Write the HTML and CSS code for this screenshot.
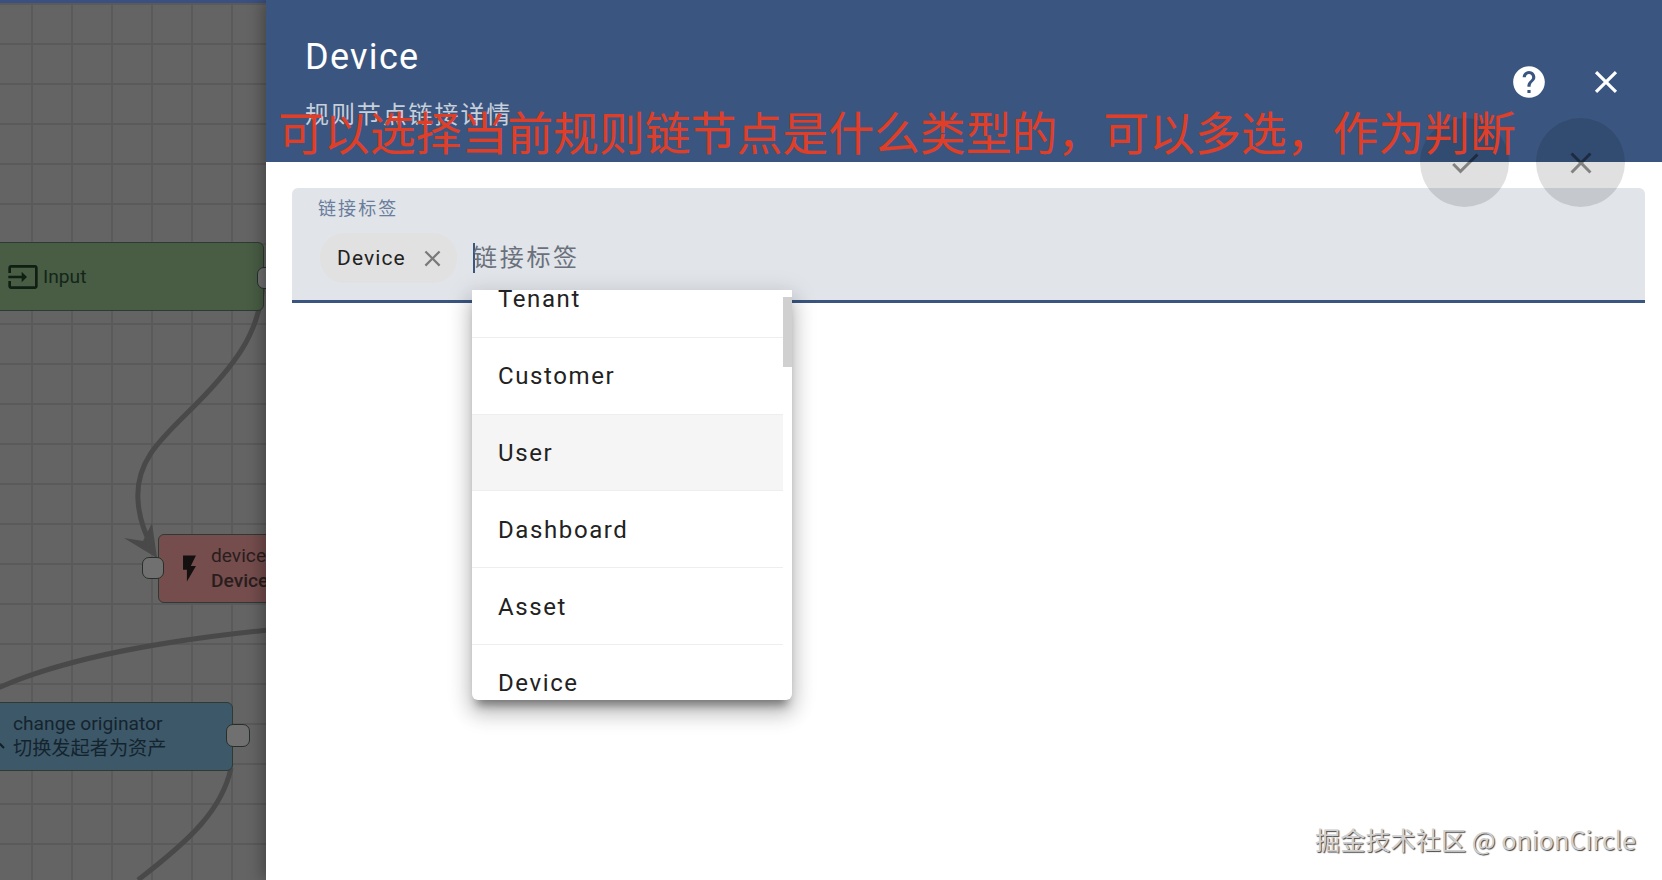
FILE: index.html
```html
<!DOCTYPE html>
<html lang="zh">
<head>
<meta charset="utf-8">
<title>Device</title>
<link rel="stylesheet" href="styles.css">
</head>
<body>
<div class="app">
  <div class="canvas">
    <svg class="edges" width="266" height="880" viewBox="0 0 266 880">
      <path class="edge" d="M263 285 C259 330 240 358 205 395 C170 432 135 455 138 500 C139 520 146 535 153 550"/>
      <path class="arrow" d="M157 558 L124 538 L143 541 L152 523 Z"/>
      <path class="edge" d="M-2 688 C70 656 170 640 268 630"/>
      <path class="edge" d="M231 768 C222 810 190 840 138 880"/>
    </svg>
    <div class="node node-input">
      <svg class="node-icon" viewBox="0 0 24 24"><path d="M21 3.01H3c-1.1 0-2 .9-2 2V9h2V4.99h18v14.03H3V15H1v4.01c0 1.1.9 1.98 2 1.98h18c1.1 0 2-.88 2-1.98v-14c0-1.11-.9-2-2-2zM11 16l4-4-4-4v3H1v2h10v3z"/></svg>
      <span class="node-label">Input</span>
      <span class="port port-out"></span>
    </div>
    <div class="node node-device">
      <span class="port port-in"></span>
      <svg class="node-icon" viewBox="0 0 24 24"><path d="M7 2v11h3v9l7-12h-4l4-8z"/></svg>
      <div class="node-text">
        <span class="node-type">device</span>
        <span class="node-name">Device</span>
      </div>
    </div>
    <div class="node node-change">
      <svg class="node-stub" viewBox="0 0 8 8"><path d="M0 1 L5 6"/></svg>
      <div class="node-text">
        <span class="node-type">change originator</span>
        <span class="node-type">切换发起者为资产</span>
      </div>
      <span class="port port-right"></span>
    </div>
  </div>

  <div class="panel">
    <header class="panel-header">
      <div class="titles">
        <div class="title">Device</div>
        <div class="subtitle">规则节点链接详情</div>
      </div>
      <div class="header-actions">
        <svg class="help" viewBox="0 0 24 24"><path d="M12 2C6.48 2 2 6.48 2 12s4.48 10 10 10 10-4.48 10-10S17.52 2 12 2zm1 17h-2v-2h2v2zm2.07-7.75l-.9.92C13.45 12.9 13 13.5 13 15h-2v-.5c0-1.1.45-2.1 1.17-2.83l1.24-1.26c.37-.36.59-.86.59-1.41 0-1.1-.9-2-2-2s-2 .9-2 2H8c0-2.21 1.79-4 4-4s4 1.79 4 4c0 .88-.36 1.68-.93 2.25z"/></svg>
        <svg class="close" viewBox="0 0 24 24"><path d="M19 6.41L17.59 5 12 10.59 6.41 5 5 6.41 10.59 12 5 17.59 6.41 19 12 13.41 17.59 19 19 17.59 13.41 12z"/></svg>
      </div>
    </header>
    <div class="panel-body">
      <div class="field">
        <div class="field-label">链接标签</div>
        <div class="field-row">
          <div class="chip">
            <span>Device</span>
            <svg class="chip-x" viewBox="0 0 24 24"><path d="M19 6.41L17.59 5 12 10.59 6.41 5 5 6.41 10.59 12 5 17.59 6.41 19 12 13.41 17.59 19 19 17.59 13.41 12z"/></svg>
          </div>
          <div class="placeholder">链接标签</div>
        </div>
      </div>
    </div>
  </div>

  <div class="menu">
    <div class="menu-clip">
      <div class="menu-list">
        <div class="option">Tenant</div>
        <div class="option">Customer</div>
        <div class="option option-hover">User</div>
        <div class="option">Dashboard</div>
        <div class="option">Asset</div>
        <div class="option">Device</div>
      </div>
    </div>
    <div class="thumb"></div>
  </div>

  <div class="fab fab-check">
    <svg viewBox="0 0 24 24"><path d="M9 16.17L4.83 12l-1.42 1.41L9 19 21 7l-1.41-1.41z"/></svg>
  </div>
  <div class="fab fab-cancel">
    <svg viewBox="0 0 24 24"><path d="M19 6.41L17.59 5 12 10.59 6.41 5 5 6.41 10.59 12 5 17.59 6.41 19 12 13.41 17.59 19 19 17.59 13.41 12z"/></svg>
  </div>

  <div class="annotation">可以选择当前规则链节点是什么类型的，可以多选，作为判断</div>
  <div class="watermark">掘金技术社区 @ onionCircle</div>
</div>
</body>
</html>
```
FILE: styles.css
```css
* { box-sizing: border-box; }
html, body { margin: 0; height: 100%; overflow: hidden; background: #fff; }
body { font-family: Roboto, "Noto Sans CJK SC", sans-serif; }

.app { position: relative; display: flex; width: 1662px; height: 880px; overflow: hidden; }

/* rule chain canvas, dimmed by the backdrop */
.canvas {
  position: relative;
  flex: 0 0 266px;
  height: 880px;
  border-top: 3px solid #3a5080;
  background-color: #646464;
  background-image:
    linear-gradient(to right, #5a5a5a 2px, transparent 2px),
    linear-gradient(to bottom, #5a5a5a 2px, transparent 2px);
  background-size: 40px 40px;
  background-position: 31px 0;
  overflow: hidden;
}
.edges { position: absolute; left: 0; top: -3px; }
.edge { fill: none; stroke: #494949; stroke-width: 5; }
.arrow { fill: #494949; }

.node {
  position: absolute;
  display: flex;
  align-items: center;
  border: 1px solid #2e3a34;
  border-radius: 6px;
  font-size: 19.2px;
  color: #1b2a22;
}
.node-input { left: -10px; top: 239px; width: 274px; height: 69px; background: #485d44; padding-left: 16px; }
.node-input .node-icon { width: 32px; height: 32px; fill: #0f1f12; margin-right: 4px; }
.node-label { color: #14261a; }
.node-device { left: 158px; top: 531px; width: 130px; height: 69px; background: #754d4d; padding-left: 15px; color: #2a1d1d; }
.node-device .node-icon { width: 31px; height: 31px; fill: #141010; margin-right: 6px; }
.node-change { left: -12px; top: 699px; width: 245px; height: 69px; background: #3d5868; padding-left: 24px; color: #14242f; }
.node-stub { position: absolute; left: 10px; top: 39px; width: 8px; height: 8px; fill: none; stroke: #10202a; stroke-width: 2; }
.node-text { display: flex; flex-direction: column; gap: 2px; line-height: 23px; white-space: nowrap; padding-bottom: 2px; }
.node-name { font-weight: 500; }

.port {
  position: absolute;
  width: 22px;
  height: 22px;
  border: 1px solid #26302b;
  border-radius: 7px;
  background: #707070;
}
.port-out { right: -16px; top: 24px; }
.port-in { left: -17px; top: 22px; }
.port-right { right: -18px; top: 21px; width: 24px; height: 23px; }

/* side panel */
.panel { flex: 1; display: flex; flex-direction: column; background: #fff; box-shadow: -4px 0 14px rgba(0, 0, 0, .3); position: relative; }
.panel-header {
  height: 162px;
  flex: none;
  display: flex;
  justify-content: space-between;
  background: #3a5680;
  color: #fff;
  padding: 0 40px 0 39px;
}
.titles { padding-top: 33px; }
.title { font-size: 36px; line-height: 48px; letter-spacing: 1.3px; }
.subtitle { margin-top: 18px; font-size: 24px; line-height: 32px; letter-spacing: 1.9px; color: rgba(255, 255, 255, .72); }
.header-actions { display: flex; align-items: center; gap: 39px; height: 164px; margin-right: -3px; }
.help { width: 38px; height: 38px; fill: #fff; }
.close { width: 38px; height: 38px; fill: #fff; }

.panel-body { padding: 26px 17px 0 26px; }
.field {
  height: 115px;
  background: #e1e4e9;
  border-radius: 6px 6px 0 0;
  border-bottom: 3px solid #3a5680;
  padding: 9px 0 0 26px;
}
.field-label { font-size: 18px; line-height: 24px; letter-spacing: 2.1px; color: #6a7d9c; }
.field-row { display: flex; align-items: center; margin-top: 12px; margin-left: 2px; }
.chip {
  display: flex;
  align-items: center;
  width: 137px;
  height: 50px;
  border-radius: 24px;
  background: #e1e1e1;
  padding-left: 17px;
  font-size: 21px;
  letter-spacing: 1.1px;
  color: #222;
}
.chip-x { width: 27px; height: 27px; fill: #7a7a7a; margin-left: 13px; flex: none; }
.placeholder {
  margin-left: 16px;
  height: 30px;
  border-left: 2px solid #3a5680;
  font-size: 24px;
  line-height: 31px;
  letter-spacing: 2.7px;
  text-indent: -2px;
  color: #6a717c;
}

/* dropdown */
.menu {
  position: absolute;
  left: 472px;
  top: 290px;
  width: 320px;
  height: 410px;
  background: #fff;
  border-radius: 0 0 6px 6px;
  box-shadow: 0 10px 10px -5px rgba(0, 0, 0, .4), 0 14px 20px 2px rgba(0, 0, 0, .16), 0 5px 24px 3px rgba(0, 0, 0, .13);
}
.menu-clip { height: 100%; overflow: hidden; border-radius: inherit; }
.menu-list { margin-top: -29px; padding-right: 9px; }
.option {
  height: 76.8px;
  display: flex;
  align-items: center;
  padding: 1px 0 0 26px;
  font-size: 24px;
  letter-spacing: 1.6px;
  color: #222;
  border-bottom: 1px solid #eeeeee;
}
.option-hover { background: #f5f5f5; }
.thumb { position: absolute; right: 0; top: 7px; width: 9px; height: 70px; background: #d0d0d0; }

.fab {
  position: absolute;
  top: 118px;
  width: 89px;
  height: 89px;
  border-radius: 50%;
  background: rgba(0, 0, 0, .12);
  display: flex;
  align-items: center;
  justify-content: center;
}
.fab svg { width: 36px; height: 36px; fill: rgba(0, 0, 0, .42); }
.fab-check { left: 1420px; }
.fab-cancel { left: 1536px; }

.annotation {
  position: absolute;
  left: 278px;
  top: 97px;
  font-family: "Noto Sans CJK SC", sans-serif;
  font-size: 45.85px;
  font-weight: 400;
  line-height: 66px;
  white-space: nowrap;
  color: #e03e27;
}
.watermark {
  position: absolute;
  left: 1315px;
  top: 821px;
  font-family: "Noto Sans CJK SC", sans-serif;
  font-size: 25.2px;
  line-height: 36px;
  white-space: nowrap;
  color: #d0d0d0;
  text-shadow: 1px 1px 1px #444;
}
```
